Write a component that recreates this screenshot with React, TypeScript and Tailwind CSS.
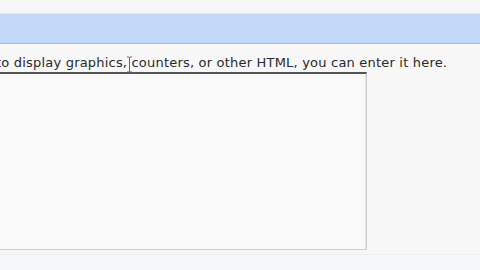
export default function App() {
  return (
    <div className="relative w-[480px] h-[270px] overflow-hidden bg-[#f7f7f7] flex flex-col" style={{ fontFamily: '"DejaVu Sans", Verdana, sans-serif' }}>
      <div className="h-[13px] shrink-0" />
      <div className="h-[31px] shrink-0 bg-[#c1d9f6] border-t border-t-[#dbe8f7] border-b border-b-[#a8bbd0]" />
      <div className="flex-1 flex flex-col ml-[-4px]">
        <p className="mt-[11px] text-[13px] tracking-[0.2px] leading-[16px] text-[#2a2a2a] whitespace-nowrap">
          to display graphics, counters, or other HTML, you can enter it here.
        </p>
        <div className="mt-[1px] w-[371px] h-[178px] border border-[#cfcfcf] border-t-2 border-t-[#555] bg-[#f9f9f9] shadow-[inset_-1px_0_0_#e4e4e4]" />
        <div className="mt-[4px] flex-1 bg-[#f6f7fa] border-t border-t-[#eeeeee]" />
      </div>
      {/* text cursor */}
      <svg className="absolute left-[126px] top-[56px]" width="7" height="17" viewBox="0 0 7 17">
        <path d="M1 1h2l.5.5L4 1h2M3.5 1.5v14M1 16h2l.5-.5L4 16h2" fill="none" stroke="#666" strokeWidth="1" />
      </svg>
    </div>
  );
}
